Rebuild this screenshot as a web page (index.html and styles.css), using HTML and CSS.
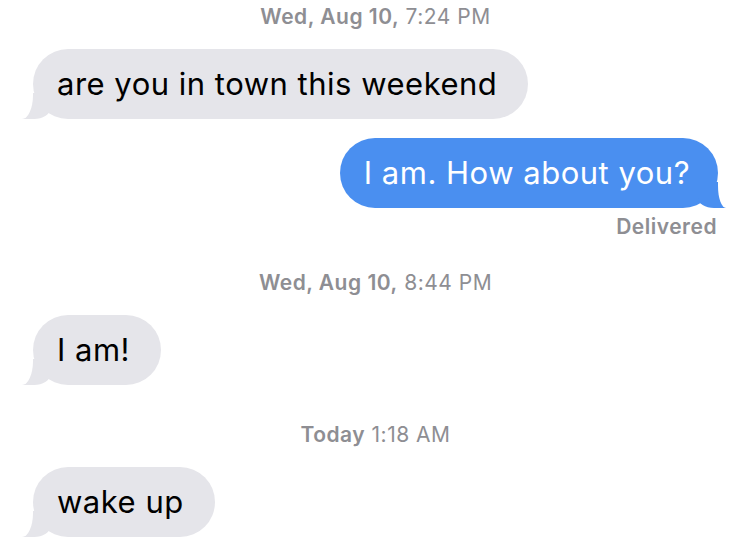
FILE: index.html
```html
<!DOCTYPE html>
<html lang="en">
<head>
  <meta charset="UTF-8" />
  <title>Messages</title>
  <meta name="viewport" content="width=device-width, initial-scale=1.0" />
  <link rel="stylesheet" href="styles.css">
</head>
<body>

  <div class="chat">

    <div class="stamp"><b>Wed, Aug 10,</b> 7:24 PM</div>

    <div class="row them gap-after-stamp">
      <div class="bubble">are you in town this weekend</div>
    </div>

    <div class="row me gap-between">
      <div class="bubble">I am. How about you?</div>
    </div>
    <div class="status">Delivered</div>

    <div class="stamp stamp-after-status"><b>Wed, Aug 10,</b> 8:44 PM</div>

    <div class="row them gap-after-stamp">
      <div class="bubble">I am!</div>
    </div>

    <div class="stamp stamp-after-bubble"><b>Today</b> 1:18 AM</div>

    <div class="row them gap-after-stamp">
      <div class="bubble">wake up</div>
    </div>

  </div>

</body>
</html>
```

FILE: styles.css
```css
:root {
  --azul: #4a8ff0;
  --cinza-bolha: #e5e5ea;
  --cinza-texto: #8e8e93;
  --fundo: #ffffff;
}

body {
  margin: 0;
  background: var(--fundo);
  font-family: Inter, "Liberation Sans", Arial, sans-serif;
  color: #000;
}

.chat {
  display: flex;
  flex-direction: column;
  padding: 5px 32px 0 33px;
}

.stamp {
  text-align: center;
  font-size: 21px;
  line-height: 24px;
  letter-spacing: 0.5px;
  color: var(--cinza-texto);
}

.stamp b {
  font-weight: 600;
}

.stamp-after-status {
  margin-top: 32px;
}

.stamp-after-bubble {
  margin-top: 38px;
}

.row {
  display: flex;
}

.row.me {
  justify-content: flex-end;
}

.gap-after-stamp {
  margin-top: 20px;
}

.gap-between {
  margin-top: 19px;
}

.bubble {
  position: relative;
  height: 70px;
  line-height: 70px;
  font-size: 31px;
  letter-spacing: 0.5px;
  padding: 0 31px 0 24px;
  border-radius: 35px;
  white-space: nowrap;
}

.them .bubble {
  background: var(--cinza-bolha);
  color: #000;
}

.me .bubble {
  background: var(--azul);
  color: #fff;
  padding: 0 28px 0 24px;
}

/* rabinho da bolha */
.bubble::before,
.bubble::after {
  content: "";
  position: absolute;
  bottom: 0;
  height: 26px;
}

.them .bubble::before {
  left: -11px;
  width: 28px;
  background: var(--cinza-bolha);
  border-bottom-right-radius: 16px 10px;
}

.them .bubble::after {
  left: -30px;
  width: 30px;
  background: var(--fundo);
  border-bottom-right-radius: 11px 24px;
}

.me .bubble::before {
  right: -8px;
  width: 28px;
  background: var(--azul);
  border-bottom-left-radius: 16px 10px;
}

.me .bubble::after {
  right: -30px;
  width: 30px;
  background: var(--fundo);
  border-bottom-left-radius: 8px 22px;
}

.status {
  align-self: flex-end;
  margin-top: 7px;
  margin-right: 1px;
  font-size: 21px;
  line-height: 24px;
  letter-spacing: 0.5px;
  font-weight: 600;
  color: var(--cinza-texto);
}
```
